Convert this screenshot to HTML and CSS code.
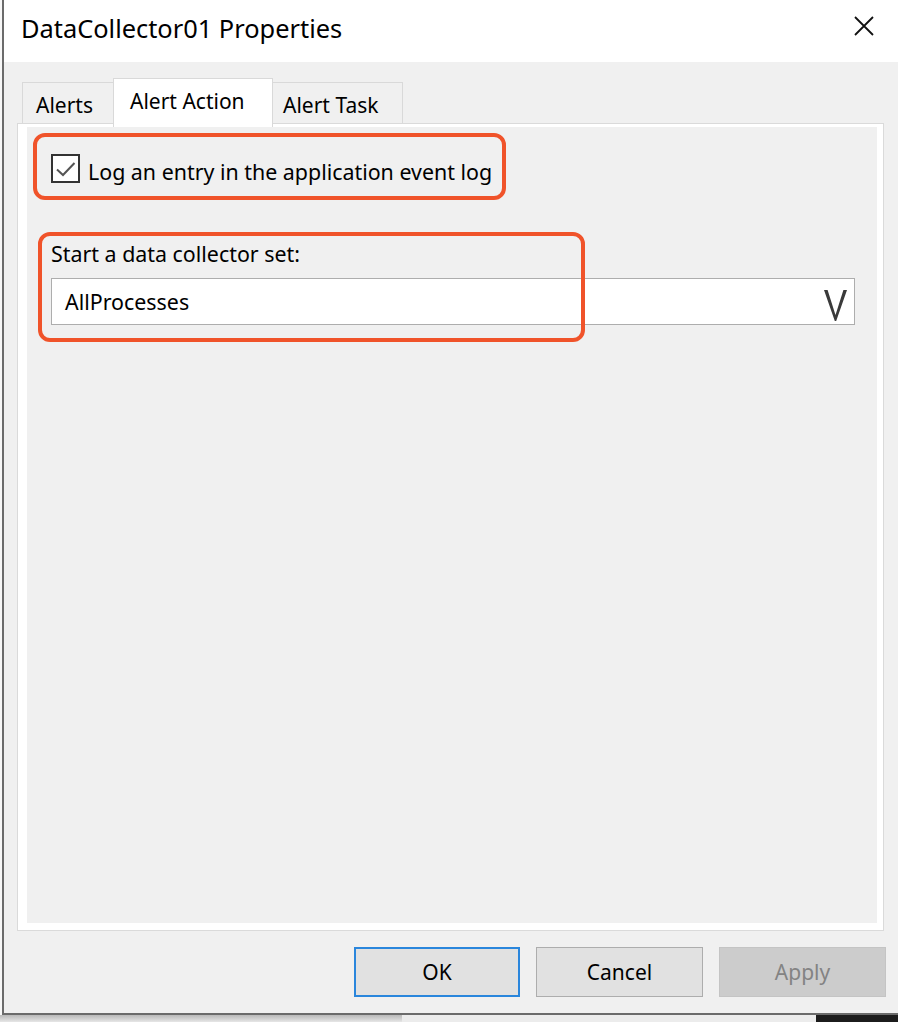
FILE: index.html
```html
<!DOCTYPE html>
<html lang="en">
<head>
<meta charset="utf-8">
<title>DataCollector01 Properties</title>
<link rel="stylesheet" href="styles.css">
</head>
<body>
<div class="screen">
  <div class="window">
    <div class="titlebar">
      <span class="title">DataCollector01 Properties</span>
      <svg class="close" width="20" height="20" viewBox="0 0 20 20">
        <path d="M1 1 L19 19 M19 1 L1 19" stroke="#111" stroke-width="1.8" fill="none"/>
      </svg>
    </div>
    <div class="client">
      <div class="tabs">
        <div class="tab tab-alerts">Alerts</div>
        <div class="tab tab-action selected">Alert Action</div>
        <div class="tab tab-task">Alert Task</div>
      </div>
      <div class="panel">
        <div class="page">
          <div class="check-row">
            <svg class="checkbox" width="29" height="29" viewBox="0 0 29 29">
              <rect x="1" y="1" width="27" height="27" fill="#fff" stroke="#333" stroke-width="2"/>
              <polyline points="6,15.5 12,21 23.5,9" fill="none" stroke="#555" stroke-width="2"/>
            </svg>
            <span class="check-label">Log an entry in the application event log</span>
          </div>
          <div class="field-label">Start a data collector set:</div>
          <div class="combo">
            <span class="combo-value">AllProcesses</span>
            <svg class="chevron" width="23" height="33" viewBox="0 0 23 33">
              <polygon points="0,1 3.6,1 11.5,26 19.4,1 23,1 12.2,32 10.8,32" fill="#3a3a3a"/>
            </svg>
          </div>
          <div class="hl hl-1"></div>
          <div class="hl hl-2"></div>
        </div>
      </div>
      <div class="buttons">
        <div class="btn btn-ok">OK</div>
        <div class="btn btn-cancel">Cancel</div>
        <div class="btn btn-apply">Apply</div>
      </div>
    </div>
  </div>
  <div class="bottom-strip">
    <div class="shade"></div>
    <div class="light"></div>
    <div class="dark"></div>
  </div>
</div>
</body>
</html>
```

FILE: styles.css
```css
html, body {
  margin: 0;
  padding: 0;
}
body {
  background: #f7f7f7;
  font-family: "Noto Sans", "Open Sans", sans-serif;
  color: #000;
  overflow: hidden;
}
.screen {
  width: 898px;
  height: 1022px;
  overflow: hidden;
}
.window {
  margin-left: 2px;
  width: 896px;
  height: 1015px;
  box-sizing: border-box;
  border-left: 2px solid #6b6b6b;
  border-bottom: 2px solid #6b6b6b;
  display: flex;
  flex-direction: column;
}
.titlebar {
  height: 62px;
  flex: none;
  background: #fff;
  display: flex;
  justify-content: space-between;
  align-items: flex-start;
  padding: 11px 24px 0 17px;
  box-sizing: border-box;
}
.title {
  font-size: 25.4px;
  line-height: 34px;
}
.close {
  margin-top: 5px;
}
.client {
  flex: 1;
  background: #f0f0f0;
  padding-top: 16px;
}
.tabs {
  display: flex;
  align-items: flex-end;
  margin-left: 18px;
  height: 45px;
}
.tab {
  box-sizing: border-box;
  height: 41px;
  border: 1px solid #d9d9d9;
  border-bottom: none;
  background: #f0f0f0;
  font-size: 21px;
  line-height: 29px;
  padding-top: 8px;
  white-space: nowrap;
}
.tab-alerts {
  width: 91px;
  border-right: none;
  padding-left: 13px;
}
.tab-action {
  width: 160px;
  padding-left: 16px;
}
.tab-task {
  width: 130px;
  border-left: none;
  padding-left: 10px;
}
.selected {
  height: 49px;
  margin-bottom: -4px;
  background: #fff;
  position: relative;
  z-index: 2;
}
.panel {
  margin-left: 13px;
  width: 867px;
  height: 808px;
  box-sizing: border-box;
  border: 1px solid #dadada;
  background: #fff;
  padding: 3px 6px 7px 9px;
}
.page {
  position: relative;
  height: 100%;
  box-sizing: border-box;
  background: #f0f0f0;
  padding: 27px 22px 0 24px;
}
.check-row {
  display: flex;
  align-items: flex-start;
  gap: 8px;
}
.checkbox {
  flex: none;
}
.check-label {
  font-size: 21.4px;
  line-height: 29px;
  padding-top: 3px;
  white-space: nowrap;
}
.field-label {
  margin-top: 53px;
  font-size: 21.4px;
  line-height: 29px;
}
.combo {
  margin-top: 10px;
  height: 47px;
  box-sizing: border-box;
  border: 1px solid #adadad;
  background: #fff;
  display: flex;
  align-items: center;
  justify-content: space-between;
  padding: 0 7px 0 13px;
}
.combo-value {
  font-size: 21.4px;
  line-height: 45px;
}
.chevron {
  margin-top: 8px;
}
.hl {
  position: absolute;
  box-sizing: border-box;
  border: 4px solid #f0532a;
  border-radius: 12px;
}
.hl-1 {
  left: 6px;
  top: 6px;
  width: 473px;
  height: 67px;
}
.hl-2 {
  left: 11px;
  top: 105px;
  width: 547px;
  height: 110px;
}
.buttons {
  margin-top: 16px;
  display: flex;
  gap: 16px;
  padding-left: 350px;
}
.btn {
  box-sizing: border-box;
  width: 166px;
  height: 50px;
  display: flex;
  align-items: center;
  justify-content: center;
  font-size: 21px;
  background: #e1e1e1;
  border: 1px solid #adadad;
}
.btn-ok {
  border: 2px solid #2a86dc;
}
.btn-cancel {
  width: 167px;
}
.btn-apply {
  width: 167px;
  background: #cccccc;
  border-color: #c4c4c4;
  color: #838383;
}
.bottom-strip {
  display: flex;
  height: 7px;
}
.shade {
  width: 402px;
  background: linear-gradient(#b9b9b9, #e6e6e6);
}
.light {
  width: 414px;
  background: #ececec;
}
.dark {
  flex: 1;
  background: #1c1c1c;
}
```
